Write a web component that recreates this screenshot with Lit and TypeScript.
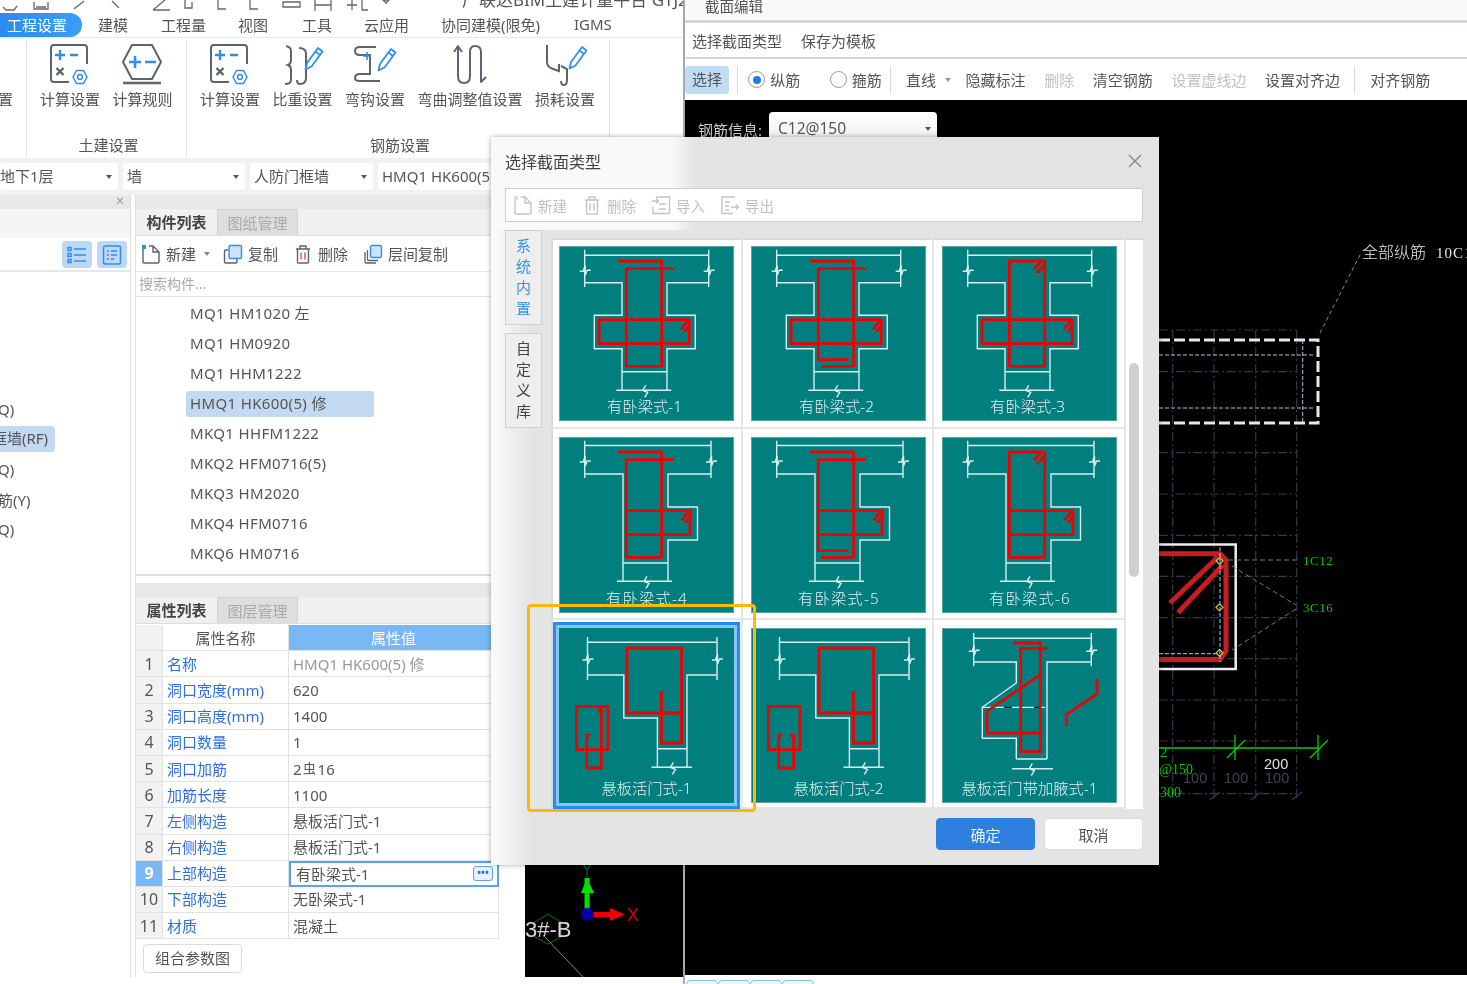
import { LitElement, html, css, svg } from 'lit';
import { customElement } from 'lit/decorators.js';

const GREY = '#5b6472';
const BLUE = '#2f8ef0';

// ---- ribbon icons ----
const gear = (x: number, y: number) => svg`
  <path d="M${x - 3.5} ${y - 6.5}h7l3.5 6.5l-3.5 6.5h-7l-3.5 -6.5z" fill="#fff" stroke=${BLUE} stroke-width="1.5" stroke-linejoin="round"/>
  <circle cx=${x} cy=${y} r="2.4" fill="none" stroke=${BLUE} stroke-width="1.5"/>`;

const calcIcon = html`<svg class="ico" viewBox="3 0 44 42" fill="none">
  <path d="M24 38H9a3 3 0 0 1-3-3V4a3 3 0 0 1 3-3H39a3 3 0 0 1 3 3V20" stroke=${GREY} stroke-width="2"/>
  <path d="M15 6v10M10 11h10M25 11h8" stroke=${BLUE} stroke-width="2.4"/>
  <path d="M11.5 24l7 7M18.5 24l-7 7" stroke=${GREY} stroke-width="2.4"/>
  ${gear(35, 33)}
</svg>`;

const ruleIcon = html`<svg class="ico" viewBox="1 0 44 42" fill="none">
  <path d="M12 1H32L41 18L32 35H12L3 18Z" stroke=${GREY} stroke-width="2" stroke-linejoin="round"/>
  <path d="M15 12v12M9 18h12M25 18h11" stroke=${BLUE} stroke-width="2.6"/>
  <path d="M3 39H41" stroke=${GREY} stroke-width="2.4"/>
</svg>`;

const pencil = (x: number, y: number) => svg`
  <path d="M${x} ${y}l-11 15l-1.5 6.5l6 -3l11 -15z" fill="#fff" stroke=${BLUE} stroke-width="1.8" stroke-linejoin="round"/>
  <path d="M${x - 2.5} ${y + 3.5}l4.5 3.5" stroke=${BLUE} stroke-width="1.6"/>`;

const densityIcon = html`<svg class="ico" viewBox="1 0 44 42" fill="none">
  <path d="M6 2Q12 3 11 9V16Q11 20 8 21Q11 22 11 26V36Q11 40 5 40" stroke=${GREY} stroke-width="2"/>
  <path d="M19 4Q26 4 26 10V34Q26 40 20 40Q17 40 17 36" stroke=${GREY} stroke-width="2"/>
  ${pencil(38, 4)}
</svg>`;

const hookIcon = html`<svg class="ico" viewBox="1 0 44 42" fill="none">
  <path d="M24 3H8Q3 3 3 7Q3 11 8 11H18V30H8Q3 30 3 34Q3 37 8 37H28" stroke=${GREY} stroke-width="2"/>
  <path d="M15 8v8M11 12h8" stroke=${BLUE} stroke-width="1.6"/>
  ${pencil(39, 5)}
</svg>`;

const bendIcon = html`<svg class="ico" viewBox="0 0 44 42" fill="none">
  <path d="M6 8L10 2L14 8M10 2V32Q10 39 16 39Q22 39 22 32V8Q22 2 27 2Q33 2 33 8V38L38 33" stroke=${GREY} stroke-width="2" stroke-linejoin="round"/>
</svg>`;

const lossIcon = html`<svg class="ico" viewBox="0 0 44 42" fill="none">
  <path d="M4 1V18Q4 23 10 25L16 27V20" stroke=${GREY} stroke-width="2"/>
  <path d="M18 22L24 25V36Q24 41 21 41Q18 41 18 37" stroke=${GREY} stroke-width="2"/>
  ${pencil(39, 3)}
</svg>`;

// ---- small toolbar icons ----
const docIcon = (c: string, mark: string) => html`<svg class="tico" viewBox="0 0 20 20" fill="none">
  <path d="M2 4V18a1 1 0 0 0 1 1H17a1 1 0 0 0 1-1V8L12 2H8M12 2V8H18" stroke=${c} stroke-width="1.4"/>
  <path d="M1 1h4v4H1z" fill=${mark}/>
</svg>`;
const trashIcon = (c: string, bar: string) => html`<svg class="tico" viewBox="0 0 20 20" fill="none">
  <path d="M3 5H17M7 5V2H13V5M4.5 5V18a1 1 0 0 0 1 1H14.5a1 1 0 0 0 1-1V5" stroke=${c} stroke-width="1.4"/>
  <path d="M8 8.5v7M12 8.5v7" stroke=${bar} stroke-width="1.4"/>
</svg>`;
const copyIcon = html`<svg class="tico" viewBox="0 0 20 20" fill="none">
  <path d="M5 6H2.5a1 1 0 0 0-1 1V18a1 1 0 0 0 1 1H13a1 1 0 0 0 1-1V15" stroke=${GREY} stroke-width="1.4"/>
  <rect x="6" y="1.5" width="12.5" height="13" rx="1.5" fill="#cfe2f9" stroke=${BLUE} stroke-width="1.4"/>
</svg>`;
const floorCopyIcon = html`<svg class="tico" viewBox="0 0 20 20" fill="none">
  <path d="M2 8V18a1 1 0 0 0 1 1H13M4.5 6V15.5a1 1 0 0 0 1 1H15" stroke=${GREY} stroke-width="1.3"/>
  <rect x="7.5" y="1.5" width="11" height="12" rx="1.5" fill="#cfe2f9" stroke=${BLUE} stroke-width="1.4"/>
</svg>`;
const importIcon = html`<svg class="tico" viewBox="0 0 20 20" fill="none" stroke="#c4c4c4" stroke-width="1.4">
  <path d="M5 2H18.5V18.5H2V12M8 9H15M8 14H15M1 6H7M5 3.5L7.5 6L5 8.5"/>
</svg>`;
const exportIcon = html`<svg class="tico" viewBox="0 0 20 20" fill="none" stroke="#c4c4c4" stroke-width="1.4">
  <path d="M15 2H2V18.5H13M5 7H10M5 11H9M5 15H9M11 12H18M16 9.5L18.5 12L16 14.5"/>
</svg>`;

// ---- section tiles, coordinates are px inside a 175x175 tile ----
const brk = (x: number, y: number) => `M${x - 5} ${y + 1}h3.5l2 -6v10l2 -5h3.5`;
const brkV = (x: number, y: number) => `M${x + 1} ${y - 5}l-3 5l5 2l-3 5`;
const CROSS = `M25.7 3.7V41M149.7 3.7V41M25.7 9.3H149.7M25.7 36.7H63V69.3H35.3V102.7H63V144.3M149.7 36.7H108V69.3H136.3V102.7H108V144.3M63 125.7H108M57.3 144.3H112.3`
  + brk(25.7, 24.3) + brk(149.7, 24.3) + brkV(85.7, 144.3);
const SIDE = `M25.7 3.7V41M152 3.7V41M25.7 8.5H152M25.7 37H64V144.3M152 37H109V70H138.5V103H109V144.3M64 126H109M58 144.3H113`
  + brk(25.7, 24) + brk(152, 24) + brkV(87, 144.3);
const FLAP = `M28.5 9V52M158 9V52M28.5 14.3H158M28.5 47H64.8V90H98.4V139.3M158 47H128V139.3M98.4 120.7H128M92.5 139.3H133` + brk(28.5, 31) + brk(158, 31) + brkV(113.4, 139.3);
const HAUNCH = `M31.7 5V38.3M149.3 5V38.3M31.7 10.3H149.3M31.7 34H74.3V55L40.3 79.3V110.3H74.3V131M149.3 34H105V131M74.3 131H105M70 140.7H111` + brk(31.7, 22.3) + brk(149.3, 22.3) + brkV(89.3, 140.7);

const HOOK_A = 'M59 15H102.7V120.3H67.3V22.7H114.7';
const HOOK_B = 'M59 15H102.7V120.3H70M114.7 22.7H67.3V113.7H97.7';
const CLOSED = 'M67.3 15H102.7V120.3H67.3Z M92 23L99 15.5M95 27L102 19.5';
const STIR_CROSS = 'M40 73.7H130.3V97.7H40ZM122 83L129 75M125.5 86L130 80';
const STIR_SIDE = 'M68 73.7H131V97.7H68M122.5 83L129.5 75M126 86L130.5 80';

interface Tile {
  label: string;
  wide?: boolean;
  white: string;
  red: string;
  extra?: unknown;
  selected?: boolean;
}

const flapRed = 'M102.4 63.3V115H122.5V20H68V85H122.5';
const tiles: Tile[] = [
  { label: '有卧梁式-1', white: CROSS, red: HOOK_A + STIR_CROSS },
  { label: '有卧梁式-2', white: CROSS, red: HOOK_B + STIR_CROSS },
  { label: '有卧梁式-3', white: CROSS, red: CLOSED + STIR_CROSS },
  { label: '有卧梁式-4', wide: true, white: SIDE, red: HOOK_A + STIR_SIDE },
  { label: '有卧梁式-5', wide: true, white: SIDE, red: HOOK_B + STIR_SIDE },
  { label: '有卧梁式-6', wide: true, white: SIDE, red: CLOSED + STIR_SIDE },
  {
    label: '悬板活门式-1',
    selected: true,
    white: FLAP,
    red: flapRed + 'M17.4 78.3H49V121.7H17.4ZM27.7 106V140H42.3V80M27.7 106L31 108M42.3 80L39 84',
  },
  {
    label: '悬板活门式-2',
    white: FLAP,
    red: flapRed + 'M17.4 78.3H49V121.7H17.4ZM27.7 106V140H42.7V106M27.7 106L31 108M42.7 106L39 108',
  },
  {
    label: '悬板活门带加腋式-1',
    white: HAUNCH,
    red: 'M71.7 15H98.3V123.7H78.7V20.3H105.7M98.3 46.7L45 83.3V105H98.3M155 50.7V66L124.3 86.7V98.3',
    extra: svg`<path d="M40 79.3H103" stroke="#d9efef" stroke-width="1.3"/><path d="M62 79.3H70M92 79.3H99" stroke="#123" stroke-width="1.6"/>`,
  },
];

const tenRows = ['MQ1 HM1020 左', 'MQ1 HM0920', 'MQ1 HHM1222', 'HMQ1 HK600(5) 修', 'MKQ1 HHFM1222', 'MKQ2 HFM0716(5)', 'MKQ3 HM2020', 'MKQ4 HFM0716', 'MKQ6 HM0716'];

const props: [string, unknown][] = [
  ['名称', 'HMQ1 HK600(5) 修'],
  ['洞口宽度(mm)', '620'],
  ['洞口高度(mm)', '1400'],
  ['洞口数量', '1'],
  ['洞口加筋', html`2<sup class="rebar">虫</sup>16`],
  ['加筋长度', '1100'],
  ['左侧构造', '悬板活门式-1'],
  ['右侧构造', '悬板活门式-1'],
  ['上部构造', '有卧梁式-1'],
  ['下部构造', '无卧梁式-1'],
  ['材质', '混凝土'],
];

@customElement('app-root')
export class AppRoot extends LitElement {
  static styles = css`
    :host {
      display: block;
      width: 1467px;
      height: 984px;
      position: relative;
      overflow: hidden;
      background: #fff;
      color: #555;
      font-family: "Noto Sans", "Noto Sans CJK SC", sans-serif;
      font-size: 15px;
      filter: blur(0.35px);
    }
    * { box-sizing: border-box; }

    .left-win { position: absolute; left: 0; top: 0; width: 683px; height: 984px; display: flex; flex-direction: column; background: #fff; overflow: hidden; }
    .strip { height: 12px; flex: none; overflow: hidden; position: relative; }
    .strip svg { position: absolute; left: 0; top: -1px; }
    .strip .app-title { position: absolute; left: 462px; top: -14px; font-size: 17px; white-space: nowrap; color: #555; }

    .tabs { height: 26px; flex: none; display: flex; align-items: center; border-bottom: 1px solid #e8e8e8; font-size: 15px; }
    .tabs span { position: absolute; }
    .pill { position: absolute; left: 0; top: 13px; width: 82px; height: 24px; border-radius: 0 12px 12px 0; background: linear-gradient(90deg, #2a8cf2, #3a9df5); color: #fff; padding-left: 7px; line-height: 24px; }
    .tab-list { margin-left: 98px; display: flex; color: #555; }
    .tab-list span { position: static; }
    .tab-list .t1 { width: 63px; } .tab-list .t2 { width: 77px; } .tab-list .t3 { width: 64px; }
    .tab-list .t4 { width: 62px; } .tab-list .t5 { width: 77px; } .tab-list .t6 { width: 133px; }

    .ribbon { height: 120px; flex: none; display: flex; }
    .group { border-right: 1px solid #e2e2e2; display: flex; flex-direction: column; height: 118px; margin-top: 2px; }
    .group.g0 { width: 27px; overflow: hidden; }
    .group.g1 { width: 160px; }
    .group.g2 { width: 423px; }
    .g0 .cut { margin: 48px 0 0 -47px; white-space: nowrap; width: 60px; }
    .btns { display: flex; gap: 12.5px; padding: 4px 0 0 13px; flex: 1; }
    .rbtn { display: flex; flex-direction: column; align-items: center; white-space: nowrap; }
    .ico { width: 44px; height: 42px; margin-bottom: 2px; }
    .group-label { text-align: center; color: #555; height: 26px; line-height: 26px; padding-left: 4px; }

    .selbar { height: 37px; flex: none; background: #f1f1f1; display: flex; gap: 5px; padding-top: 5px; margin-bottom: 0; }
    .sel { height: 27px; background: #fff; border-radius: 3px; position: relative; padding-left: 4px; line-height: 26px; white-space: nowrap; overflow: hidden; }
    .sel.a { width: 118px; padding-left: 0; } .sel.b { width: 122px; } .sel.c { width: 123px; } .sel.d { width: 200px; }
    .sel::after { content: ''; position: absolute; right: 6px; top: 12px; border: 3px solid transparent; border-top: 4px solid #555; }

    .panes { flex: 1; display: flex; min-height: 0; }
    .pane-a { width: 131px; flex: none; border-right: 1px solid #dcdcdc; display: flex; flex-direction: column; margin-right: 4px; }
    .pane-head { height: 14px; flex: none; background: #e8e8e8; position: relative; }
    .pane-head .x { position: absolute; right: 6px; top: -3px; font-size: 14px; color: #999; line-height: 18px; }
    .pane-sub { height: 29px; flex: none; background: #f5f5f5; }
    .pane-tools { height: 34px; flex: none; display: flex; justify-content: flex-end; gap: 5px; padding: 3px 3px 0 0; border-bottom: 2px solid #e6e6e6; }
    .view-btn { width: 30px; height: 27px; border-radius: 4px; background: #bcd8f5; display: flex; align-items: center; justify-content: center; }
    .view-btn svg { width: 22px; height: 20px; }
    .pane-list { padding-top: 122px; overflow: hidden; }
    .pane-list div { height: 30px; display: flex; align-items: center; white-space: nowrap; text-indent: -2px; }
    .pane-list .on span { display: block; background: #c3d9f2; height: 26px; line-height: 25px; width: 55px; border-radius: 0 4px 4px 0; overflow: hidden; text-indent: -8px; }

    .pane-b { width: 390px; flex: none; display: flex; flex-direction: column; border-left: 1px solid #e0e0e0; }
    .tabbar { height: 27px; flex: none; background: #f0f0f0; display: flex; border-bottom: 1px solid #dcdcdc; }
    .tabbar span { width: 81px; text-align: center; line-height: 26px; }
    .tabbar .active { font-weight: 700; color: #444; }
    .tabbar .idle { background: #dedede; color: #aaa; border: 1px solid #d2d2d2; border-bottom: none; }
    .btools { height: 36px; flex: none; display: flex; align-items: center; padding-left: 5px; font-size: 15px; border-bottom: 1px solid #eaeaea; }
    .tico { width: 20px; height: 20px; flex: none; }
    .btools span { margin-left: 5px; }
    .btools .caret { margin: 4px 13px 0 8px; border: 3px solid transparent; border-top: 4px solid #888; height: 0; width: 0; }
    .btools .g { margin-right: 15px; }
    .search { height: 25px; flex: none; color: #aaa; font-size: 14px; line-height: 24px; padding-left: 3px; border-bottom: 1px solid #e2e2e2; }
    .tree { height: 279px; flex: none; padding-top: 2px; border-bottom: 2px solid #dedede; }
    .tree div { height: 30px; display: flex; align-items: center; padding-left: 50px; }
    .tree span { padding: 0 4px; height: 26px; line-height: 25px; border-radius: 3px; width: 188px; white-space: nowrap; letter-spacing: 0.35px; }
    .tree .on span { background: #c3d9f2; }
    .gap7 { height: 7px; flex: none; }
    .pane-head.b { height: 14px; }

    .ptable { width: 363px; margin-top: 1px; display: grid; grid-template-columns: 27px 126px 210px; grid-auto-rows: 26.2px; font-size: 15px; line-height: 22px; }
    .ptable > div { border-right: 1px solid #e2e2e2; border-bottom: 1px solid #e2e2e2; display: flex; align-items: center; white-space: nowrap; overflow: hidden; }
    .ptable .idx { justify-content: center; background: #f2f2f2; color: #555; font-size: 16px; }
    .ptable .name { color: #2f6fe0; padding-left: 4px; }
    .ptable .val { padding-left: 4px; color: #555; }
    .ptable .val.ro { color: #999; }
    .ptable .hd { justify-content: center; color: #555; }
    .ptable .hd.blue { background: #7ab8f5; color: #fff; }
    .ptable .idx.on { background: #7ab8f5; color: #fff; font-weight: 700; }
    .ptable .val.edit { border: 2px solid #5aa2ee; padding-left: 5px; position: relative; }
    .more { position: absolute; right: 4px; top: 3px; width: 20px; height: 15px; border: 1px solid #5aa2ee; border-radius: 3px; background: #e6f1fd; color: #2f6fe0; font-size: 10px; line-height: 10px; text-align: center; font-weight: 700; }
    .rebar { font-size: 13px; line-height: 1; margin: 0 1.5px; vertical-align: 3px; }
    .combo { margin: 5px 0 0 7px; width: 99px; height: 29px; border: 1px solid #dcdcdc; border-radius: 4px; text-align: center; line-height: 27px; background: #fff; }

    .mini-canvas { flex: 1; background: #000; position: relative; height: 782px; }
    .mini-canvas svg { position: absolute; inset: 0; }
    .left-foot { height: 7px; flex: none; }

    .right-win { position: absolute; left: 683px; top: 0; width: 784px; height: 984px; display: flex; flex-direction: column; border-left: 2px solid #a8a8a8; background: #fff; }
    .rt-title { height: 20px; flex: none; padding-left: 20px; overflow: hidden; line-height: 12px; font-size: 14.5px; color: #555; background: #fafafa; }
    .rt-menu { height: 39px; flex: none; border-top: 3px solid #d3d6da; border-bottom: 2px solid #d3d6da; display: flex; align-items: center; gap: 19px; padding-left: 7px; }
    .rt-tools { height: 41px; flex: none; display: flex; align-items: center; gap: 18.6px; font-size: 15px; white-space: nowrap; }
    .rt-tools .pickbtn { width: 44px; height: 28px; background: #c0dcf5; border-radius: 4px; text-align: center; line-height: 27px; margin-right: -11px; }
    .rt-tools .vsep { width: 1px; height: 28px; background: #ddd; }
    .rt-tools .vsep.tight { margin: 0 -3px 0 -5px; }
    .rt-tools .off { color: #c2c2c2; }
    .rt-tools .radio { display: flex; align-items: center; gap: 5px; margin-left: -8px; width: 71px; }
    .rt-tools .radio.last { width: 54px; margin-right: -12px; }
    .dot { width: 17px; height: 17px; border-radius: 50%; border: 1px solid #999; background: #fff; position: relative; flex: none; }
    .dot.on::after { content: ''; position: absolute; left: 3.5px; top: 3.5px; width: 8px; height: 8px; border-radius: 50%; background: #1f7fe8; }
    .line-pick { display: flex; align-items: center; gap: 9px; margin-right: -4px; margin-left: -4px; }
    .line-pick i { border: 3px solid transparent; border-top: 4px solid #999; margin-top: 4px; }
    .cad { height: 875px; flex: none; background: #000; position: relative; }
    .cad > svg { position: absolute; inset: 0; }
    .rebar-info { position: absolute; left: 13px; top: 12px; display: flex; align-items: center; gap: 7px; color: #ccc; }
    .rebar-sel { width: 168px; height: 34px; background: linear-gradient(#fff, #ececec); border-radius: 4px; color: #555; padding-left: 9px; line-height: 33px; font-size: 15.5px; position: relative; }
    .rebar-sel::after { content: ''; position: absolute; right: 6px; top: 15px; border: 3px solid transparent; border-top: 4px solid #555; }
    .rt-foot { flex: 1; display: flex; padding: 5px 0 0 1px; }
    .rt-foot i { width: 32px; height: 12px; border: 1px solid #8dbdf2; border-radius: 4px 4px 0 0; background: #eef5fd; }

    .dialog {
      position: absolute; left: 491px; top: 137px; width: 668px; height: 728px;
      padding: 0 16px 0 14px;
      background:
        linear-gradient(90deg, #f9f9f9 0, #f9f9f9 180px, rgba(249, 249, 249, 0) 205px) 0 0 / 100% 93px no-repeat,
        linear-gradient(90deg, #fbfbfb 0, #e4e4e4 40px) 0 93px / 100% 100% no-repeat;
      background-color: #e3e3e3;
      box-shadow: 0 0 5px rgba(0, 0, 0, 0.35);
      display: flex; flex-direction: column;
    }
    .dlg-title { height: 51px; flex: none; display: flex; align-items: center; justify-content: space-between; font-size: 16px; color: #444; padding: 0 0 4px; }
    .dlg-title svg { width: 16px; height: 16px; margin-right: 0; }
    .dlg-tools { height: 34px; flex: none; background: #fff; border: 1px solid #c9ced5; display: flex; align-items: center; padding-left: 7px; color: #c0c0c0; font-size: 14.5px; }
    .dlg-tools span { margin: 0 15px 0 5px; }
    .dlg-body { display: flex; margin-top: 8px; height: 579px; flex: none; }
    .side { width: 37px; flex: none; margin-right: 9px; display: flex; flex-direction: column; gap: 8px; }
    .side div { height: 95px; background: #eeeeee; border: 1px solid #cfcfcf; display: flex; flex-direction: column; align-items: center; justify-content: center; line-height: 21px; font-size: 15px; color: #444; padding-bottom: 2px; }
    .side .cur { color: #3a8fe8; }
    .gridwrap { flex: 1; margin-top: 8px; height: 571px; background: #fff; box-shadow: inset 2px 2px 0 #d8d8d8; display: flex; }
    .grid { width: 574px; flex: none; display: grid; grid-template-columns: repeat(3, 191.5px); grid-template-rows: 190.5px 191.5px 189px; }
    .cell { padding: 8px; border-right: 2px solid #e6e6e6; border-bottom: 2px solid #e6e6e6; }
    .tile { display: block; width: 175px; height: 175px; background: #017f7e; outline: 1px solid #55a6a3; outline-offset: -1px; }
    .tile.tall { height: 176px; }
    .tile.picked { box-shadow: 0 0 0 3px #8cc2f6, 0 0 0 6px #1c8ff2; outline: none; }
    .tile text { font-size: 15.3px; fill: #e4f3f2; text-anchor: middle; font-family: "Noto Sans", "Noto Sans CJK SC", sans-serif; font-weight: 300; }
    .tile text.wide { letter-spacing: 1.2px; }
    .scroll { flex: 1; position: relative; }
    .thumb { position: absolute; left: 4px; top: 125px; width: 10px; height: 214px; border-radius: 5px; background: #cfcfcf; }
    .dlg-foot { display: flex; justify-content: flex-end; gap: 9px; margin-top: 9px; }
    .dlg-btn { width: 99px; height: 32px; border-radius: 4px; text-align: center; line-height: 32px; background: #fff; border: 1px solid #dedede; color: #555; }
    .dlg-btn.ok { background: #2f7fe0; border-color: #2f7fe0; color: #e8f1fc; }

    .callout { position: absolute; left: 527px; top: 604px; width: 229px; height: 208px; border: 3px solid #ffb900; border-radius: 4px; pointer-events: none; }
  `;

  private renderTile(t: Tile, i: number) {
    const tall = i >= 3 && i < 6;
    // wide and long captions sit a little right of the plain ones
    const labelX = t.wide ? 88 : t.label.length > 6 ? 87.5 : 85.5;
    return html`<div class="cell">
      <svg class="tile ${tall ? 'tall' : ''} ${t.selected ? 'picked' : ''}" viewBox="0 0 175 ${tall ? 176 : 175}" fill="none">
        <path d=${t.white} stroke="#d9efef" stroke-width="1.4"/>
        ${t.extra ?? ''}
        <path d=${t.red} stroke="#f00000" stroke-width="2.8" stroke-linejoin="round"/>
        <text class=${t.wide ? 'wide' : ''} x=${labelX} y=${t.wide ? 167 : 166}>${t.label}</text>
      </svg>
    </div>`;
  }

  private renderTopStrip() {
    return svg`<svg width="400" height="14" viewBox="0 0 400 14" fill="none" stroke="#666" stroke-width="1.3">
      <path d="M3 8L6 11H14L17 7M34 3V10H48V3M36 8H46M74 10L84 2M112 2L119 9M153 11H170M153 11L166 0M185 0V9H192V3M186 3M218 0V10H226M250 0V10H258M283 8H300V3H283ZM315 0V12M331 0V12M315 6H331M347 6H357M352 1V11M362 1V11H368M383 1H389L386 4Z"/>
    </svg>`;
  }

  private renderMiniCad() {
    return svg`<svg viewBox="0 0 158 782" fill="none">
      <g transform="translate(-525 -195)">
        <path d="M587 878V910" stroke="#00e000" stroke-width="5"/>
        <path d="M587 878L594 893H581Z" fill="#00e000"/>
        <path d="M583 864L587 870L591 864M587 870V877" stroke="#0a7a0a" stroke-width="1.2"/>
        <path d="M590 914.5H612" stroke="#f00000" stroke-width="5"/>
        <path d="M610 908L625 914.5L610 921Z" fill="#f00000"/>
        <circle cx="587.3" cy="914.3" r="6.5" fill="#0000a5"/>
        <text x="627" y="921" font-size="18" fill="#d80000" font-family="Liberation Sans, sans-serif">X</text>
        <path d="M548 914L561 922V937L548 944L535 937V922Z" stroke="#0a5a0a" stroke-width="1.2"/>
        <text x="525" y="937" font-size="22" fill="#d8d8d8" font-family="Liberation Sans, sans-serif">3#-B</text>
        <path d="M543 935L583 977" stroke="#888" stroke-width="1"/>
      </g>
    </svg>`;
  }

  private renderCad() {
    const vx = [1172.7, 1214, 1255.7, 1296.7];
    const hy = [330, 371.6, 452.7, 494, 535.4, 576.4, 617.7, 658.6, 700, 741, 793.7];
    return svg`<svg viewBox="685 100 782 875" fill="none" font-family="Liberation Serif, serif">
      <g stroke="#2f3b4a" stroke-width="1.2" stroke-dasharray="9 3 2 3">
        ${vx.map(x => svg`<path d="M${x} 330V800"/>`)}
        ${hy.map(y => svg`<path d="M1159 ${y}H1296.7"/>`)}
      </g>
      <path d="M1159 340H1318V423H1159" stroke="#e8e8e8" stroke-width="3" stroke-dasharray="11 4"/>
      <path d="M1159 355H1314M1159 408H1314M1302.7 340V423" stroke="#a9c4dc" stroke-width="1" stroke-dasharray="4 2"/>
      <path d="M1320 333L1360 255" stroke="#888" stroke-width="1" stroke-dasharray="4 3"/>
      <path d="M1159 544.6H1235.7V669H1159" stroke="#eee" stroke-width="2.5"/>
      <path d="M1159 553.8H1220L1226 560V651L1220 659.4H1159M1170 603L1218 557M1178 612.7L1223 565" stroke="#c41e24" stroke-width="5"/>
      <path d="M1220 547V662M1159 653.7H1220" stroke="#a9d0ec" stroke-width="1" stroke-dasharray="4 2"/>
      <path d="M1228 560H1297M1232 566L1296 605M1296 609L1232 650" stroke="#777" stroke-width="1" stroke-dasharray="5 3"/>
      ${[561, 607.3, 653].map(y => svg`<path d="M1219.5 ${y - 3.5}L1223 ${y}L1219.5 ${y + 3.5}L1216 ${y}Z" stroke="#e0c040" stroke-width="1.2"/>`)}
      <path d="M1159 748H1318M1235 735V760M1318 735V760M1227 758L1245 740M1310 758L1328 740" stroke="#00d000" stroke-width="1.3"/>
      <path d="M1210 800L1220 792M1251 800L1261 792M1292 800L1302 792" stroke="#2f3b4a" stroke-width="1.2"/>
      <text x="1362" y="258" font-size="16" fill="#e8e8e8" font-family="Noto Sans CJK SC, sans-serif" font-weight="300">全部纵筋</text>
      <text x="1436" y="258" font-size="15" fill="#e8e8e8" letter-spacing="1">10C12</text>
      <text x="1303" y="565" font-size="13" fill="#00c800" letter-spacing="0.5">1C12</text>
      <text x="1303" y="612" font-size="13" fill="#00c800" letter-spacing="0.5">3C16</text>
      <text x="1160" y="757" font-size="15" fill="#00c800">2</text>
      <text x="1159" y="774" font-size="14" fill="#00c800">@150</text>
      <text x="1160" y="797" font-size="14" fill="#00c800">300</text>
      <text x="1264" y="769" font-size="14.5" fill="#e0e0e0" font-family="Liberation Sans, sans-serif">200</text>
      ${[1183, 1224, 1265].map(x => svg`<text x=${x} y="783" font-size="14.5" fill="#3b4652" font-family="Liberation Sans, sans-serif">100</text>`)}
    </svg>`;
  }

  render() {
    return html`
      <div class="left-win">
        <div class="strip">${this.renderTopStrip()}<span class="app-title">广联达BIM土建计量平台 GTJ2025</span></div>
        <div class="tabs">
          <span class="pill">工程设置</span>
          <div class="tab-list">
            <span class="t1">建模</span><span class="t2">工程量</span><span class="t3">视图</span><span class="t4">工具</span><span class="t5">云应用</span><span class="t6">协同建模(限免)</span><span>IGMS</span>
          </div>
        </div>
        <div class="ribbon">
          <div class="group g0"><div class="cut">计算设置</div></div>
          <div class="group g1">
            <div class="btns">
              <div class="rbtn">${calcIcon}计算设置</div>
              <div class="rbtn">${ruleIcon}计算规则</div>
            </div>
            <div class="group-label">土建设置</div>
          </div>
          <div class="group g2">
            <div class="btns">
              <div class="rbtn">${calcIcon}计算设置</div>
              <div class="rbtn">${densityIcon}比重设置</div>
              <div class="rbtn">${hookIcon}弯钩设置</div>
              <div class="rbtn">${bendIcon}弯曲调整值设置</div>
              <div class="rbtn">${lossIcon}损耗设置</div>
            </div>
            <div class="group-label">钢筋设置</div>
          </div>
        </div>
        <div class="selbar">
          <div class="sel a">地下1层</div>
          <div class="sel b">墙</div>
          <div class="sel c">人防门框墙</div>
          <div class="sel d">HMQ1 HK600(5) 修</div>
        </div>
        <div class="panes">
          <div class="pane-a">
            <div class="pane-head"><span class="x">×</span></div>
            <div class="pane-sub"></div>
            <div class="pane-tools">
              <div class="view-btn"><svg viewBox="0 0 22 20" fill="none" stroke="#2f8ef0" stroke-width="1.5"><path d="M8 4H20M8 10H20M8 16H20"/><rect x="2" y="2.5" width="3" height="3"/><rect x="2" y="8.5" width="3" height="3"/><rect x="2" y="14.5" width="3" height="3"/></svg></div>
              <div class="view-btn"><svg viewBox="0 0 22 20" fill="none" stroke="#2f8ef0" stroke-width="1.5"><rect x="2.5" y="1" width="17" height="18" rx="2"/><path d="M6 6H8M10 6H16M6 10H8M10 10H16M6 14H8M10 14H13"/></svg></div>
            </div>
            <div class="pane-list">
              <div>Q)</div>
              <div class="on"><span>框墙(RF)</span></div>
              <div>Q)</div>
              <div>筋(Y)</div>
              <div>Q)</div>
            </div>
          </div>
          <div class="pane-b">
            <div class="pane-head b"></div>
            <div class="tabbar"><span class="active">构件列表</span><span class="idle">图纸管理</span></div>
            <div class="btools">
              ${docIcon(GREY, BLUE)}<span>新建</span><i class="caret"></i>
              ${copyIcon}<span class="g">复制</span>
              ${trashIcon(GREY, '#e05050')}<span class="g">删除</span>
              ${floorCopyIcon}<span>层间复制</span>
            </div>
            <div class="search">搜索构件...</div>
            <div class="tree">
              ${tenRows.map((r, i) => html`<div class=${i === 3 ? 'on' : ''}><span>${r}</span></div>`)}
            </div>
            <div class="gap7"></div>
            <div class="pane-head b"></div>
            <div class="tabbar"><span class="active">属性列表</span><span class="idle">图层管理</span></div>
            <div class="ptable">
              <div class="idx"></div><div class="hd">属性名称</div><div class="hd blue">属性值</div>
              ${props.map(([k, v], i) => html`
                <div class="idx ${i === 8 ? 'on' : ''}">${i + 1}</div>
                <div class="name">${k}</div>
                <div class="val ${i === 0 ? 'ro' : ''} ${i === 8 ? 'edit' : ''}">${v}${i === 8 ? html`<span class="more">•••</span>` : ''}</div>
              `)}
            </div>
            <div class="combo">组合参数图</div>
          </div>
          <div class="mini-canvas">${this.renderMiniCad()}</div>
        </div>
        <div class="left-foot"></div>
      </div>

      <div class="right-win">
        <div class="rt-title">截面编辑</div>
        <div class="rt-menu"><span>选择截面类型</span><span>保存为模板</span></div>
        <div class="rt-tools">
          <span class="pickbtn">选择</span>
          <i class="vsep"></i>
          <label class="radio"><i class="dot on"></i>纵筋</label>
          <label class="radio last"><i class="dot"></i>箍筋</label>
          <i class="vsep"></i>
          <span class="line-pick">直线<i></i></span>
          <span>隐藏标注</span>
          <span class="off">删除</span>
          <span>清空钢筋</span>
          <span class="off">设置虚线边</span>
          <span>设置对齐边</span>
          <i class="vsep tight"></i>
          <span>对齐钢筋</span>
        </div>
        <div class="cad">
          ${this.renderCad()}
          <div class="rebar-info">钢筋信息:<div class="rebar-sel">C12@150</div></div>
        </div>
        <div class="rt-foot"><i></i><i></i><i></i><i></i></div>
      </div>

      <div class="dialog">
        <div class="dlg-title">
          <span>选择截面类型</span>
          <svg viewBox="0 0 16 16" fill="none" stroke="#888" stroke-width="1.4"><path d="M2 2L14 14M14 2L2 14"/></svg>
        </div>
        <div class="dlg-tools">
          ${docIcon('#c4c4c4', '#ddd')}<span>新建</span>
          ${trashIcon('#c4c4c4', '#c4c4c4')}<span>删除</span>
          ${importIcon}<span>导入</span>
          ${exportIcon}<span>导出</span>
        </div>
        <div class="dlg-body">
          <div class="side">
            <div class="cur"><span>系</span><span>统</span><span>内</span><span>置</span></div>
            <div><span>自</span><span>定</span><span>义</span><span>库</span></div>
          </div>
          <div class="gridwrap">
            <div class="grid">${tiles.map((t, i) => this.renderTile(t, i))}</div>
            <div class="scroll"><div class="thumb"></div></div>
          </div>
        </div>
        <div class="dlg-foot">
          <div class="dlg-btn ok">确定</div>
          <div class="dlg-btn">取消</div>
        </div>
      </div>
      <div class="callout"></div>
    `;
  }
}
